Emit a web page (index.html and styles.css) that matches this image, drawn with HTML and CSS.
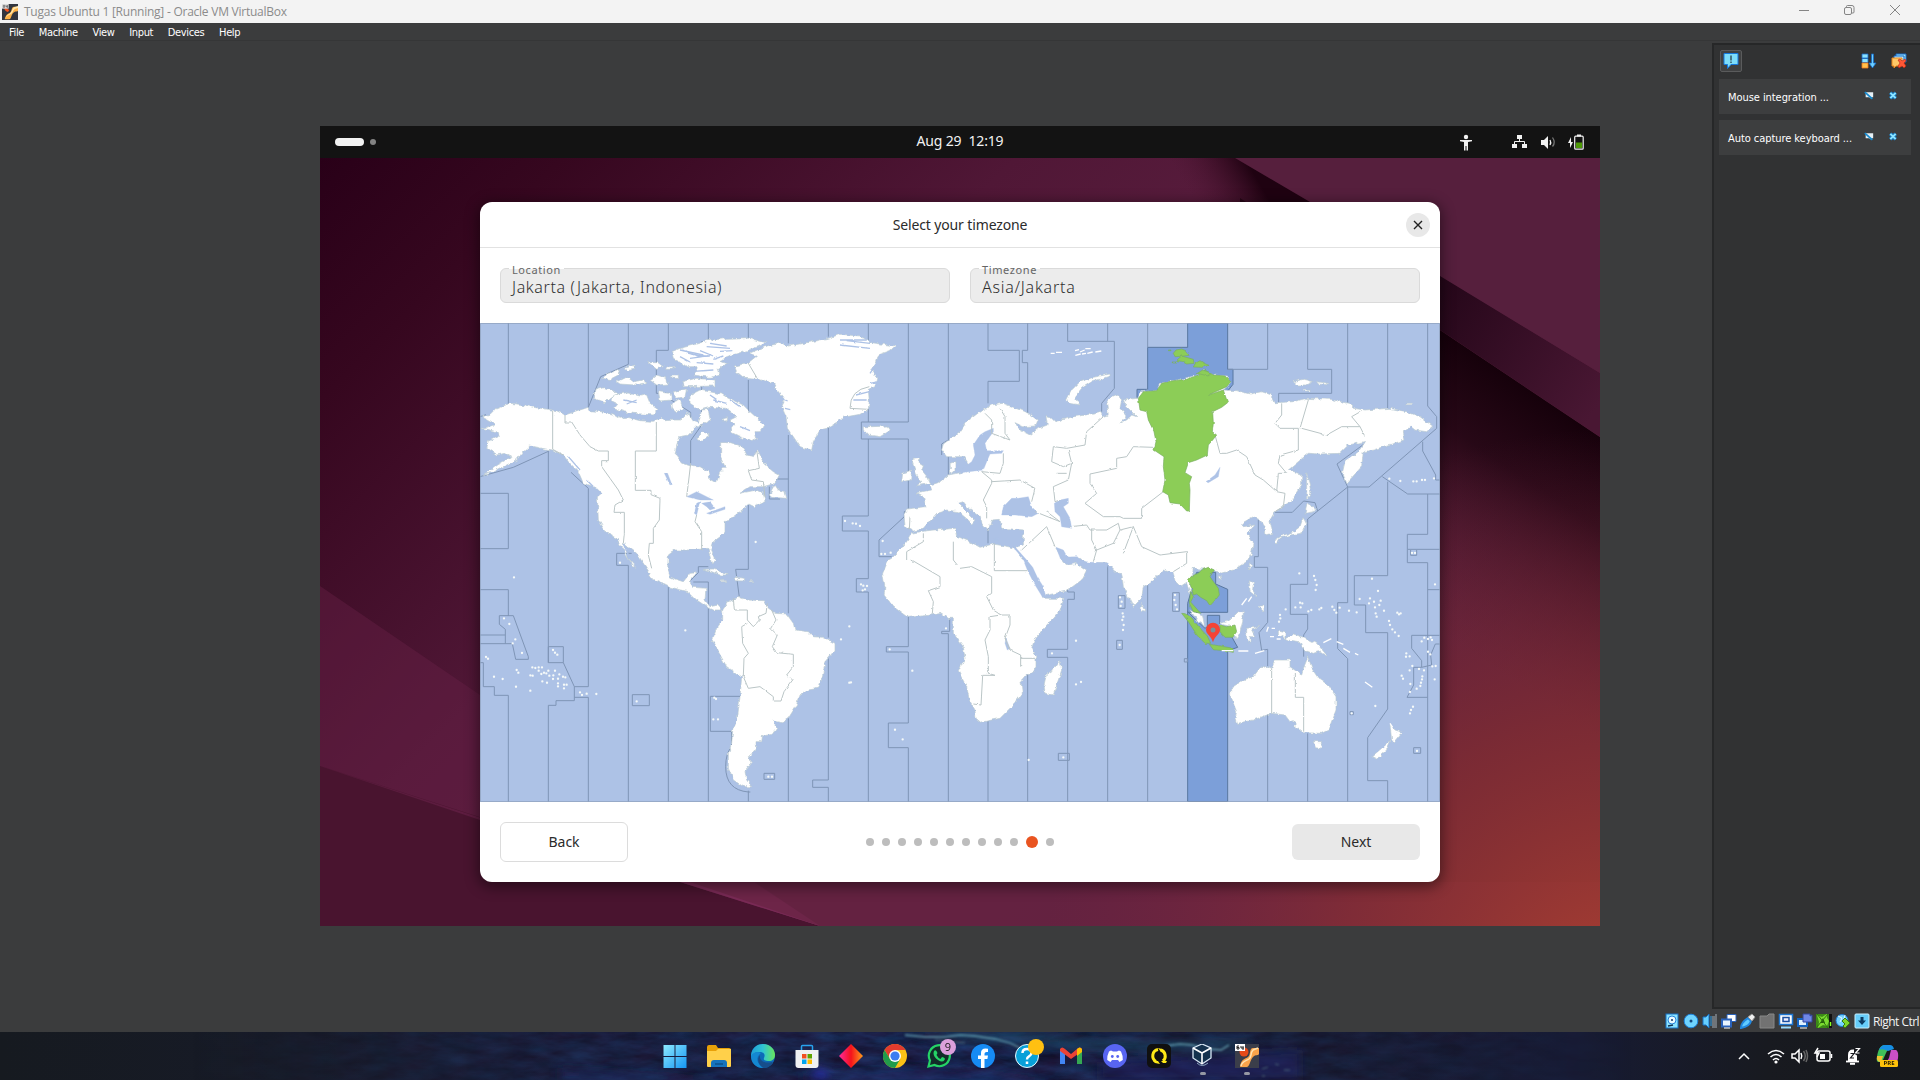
FILE: index.html
```html
<!DOCTYPE html>
<html lang="en">
<head>
<meta charset="utf-8">
<title>Tugas Ubuntu 1 [Running] - Oracle VM VirtualBox</title>
<link rel="stylesheet" href="styles.css">
</head>
<body>
<header class="titlebar">
  <svg class="app-icon" viewBox="0 0 24 24"><rect width="24" height="24" fill="#33363f"/><path d="M3 5c4 0 5 3 8 4l-2 3c-3 0-6-3-6-7z" fill="#f4511e"/><path d="M24 4h-6c-4 0-3 7-6 9s-6 2-8 10h7c3-1 3-7 6-10s6-1 7-3z" fill="#ffb347"/><path d="M24 3l-6 2c-3 3-3 6-5 8s-6 3-8 8c4-6 9-4 11-9s4-5 8-6z" fill="#ffe9b0"/><rect width="10" height="7" fill="#ddd"/><path d="M2 2h2v3H2zm4 0v2h2V2v4" stroke="#555" fill="none"/></svg>
  <span class="title">Tugas Ubuntu 1 [Running] - Oracle VM VirtualBox</span>
  <svg class="window-controls" viewBox="0 0 104 12"><g fill="none" stroke="#858585"><path d="M0 6.500h10"/><rect x="45.500" y="3.500" width="7" height="7" rx="1.500"/><path d="M47.500 3V2.500a1 1 0 0 1 1-1h4.500a2 2 0 0 1 2 2V8a1 1 0 0 1-1 1H53"/><path d="M91 1l10 10M101 1L91 11"/></g></svg>
</header>
<nav class="menubar"><span class="m-file">File</span><span class="m-machine">Machine</span><span class="m-view">View</span><span class="m-input">Input</span><span class="m-devices">Devices</span><span class="m-help">Help</span></nav>

<main class="workspace">
  <section class="guest">
    <div class="topbar">
      <div class="workspaces"><i class="pill"></i><i class="dot"></i></div>
      <div class="clock">Aug 29&nbsp; 12:19</div>
      <svg class="sysicons" viewBox="0 0 130 20" fill="#f2f2f2"><circle cx="11" cy="5" r="2.200"/><path d="M5 8h12v1.300l-4 .8V18.500h-1.500V14h-1v4.500H9v-8.400l-4-.8z"/><path d="M62 3h5v4h-5zM57 12h5v4h-5zM67 12h5v4h-5z"/><path d="M64.500 7v3M59.500 12v-2.500h10V12" fill="none" stroke="#f2f2f2"/><path d="M86 8h3l4-4v13l-4-4h-3z"/><path d="M95 8q1.500 2.500 0 5" fill="none" stroke="#f2f2f2" stroke-width="1.300"/><path d="M97.500 5.500q3.500 5 0 9" fill="none" stroke="#777" stroke-width="1.300"/><path d="M116 5l-3 6h2v5l3-6h-2z"/><rect x="119.700" y="4.200" width="8.500" height="13" rx="1" fill="none" stroke="#f2f2f2" stroke-width="1.200"/><path d="M122 2.500h4v2h-4z"/><path d="M121 10.500h6v5.500h-6z" fill="#4e9a06"/></svg>
    </div>
    <div class="desktop">
      <svg class="wallpaper" viewBox="0 0 1280 768" preserveAspectRatio="none">
        <defs>
          <linearGradient id="wp" x1="0" y1="0" x2="1" y2=".6"><stop offset="0" stop-color="#290018"/><stop offset=".14" stop-color="#36071f"/><stop offset=".4" stop-color="#501736"/><stop offset=".65" stop-color="#5c1f40"/><stop offset="1" stop-color="#5a1f38"/></linearGradient>
          <radialGradient id="glow" gradientUnits="userSpaceOnUse" cx="1300" cy="850" r="580"><stop offset="0" stop-color="#ad4130"/><stop offset=".5" stop-color="#903232" stop-opacity=".6"/><stop offset="1" stop-color="#762743" stop-opacity="0"/></radialGradient>
          <linearGradient id="facet" x1="0" y1="0" x2="1" y2=".7"><stop offset="0" stop-color="#5a1a3c"/><stop offset="1" stop-color="#712551"/></linearGradient>
          <linearGradient id="shadefold" gradientUnits="userSpaceOnUse" x1="1200" y1="226" x2="1060" y2="435"><stop offset="0" stop-color="#16010b"/><stop offset=".3" stop-color="#1e0410" stop-opacity=".85"/><stop offset="1" stop-color="#4b1627" stop-opacity="0"/></linearGradient>
          <linearGradient id="band" gradientUnits="userSpaceOnUse" x1="960" y1="30" x2="1280" y2="245"><stop offset="0" stop-color="#1f0211"/><stop offset=".5" stop-color="#26071a"/><stop offset="1" stop-color="#491733"/></linearGradient>
          <linearGradient id="topfade" gradientUnits="userSpaceOnUse" x1="925" y1="0" x2="868" y2="33"><stop offset="0" stop-color="#1f0211"/><stop offset="1" stop-color="#4c1531" stop-opacity="0"/></linearGradient>
        </defs>
        <rect width="1280" height="768" fill="url(#wp)"/>
        <path d="M0 428L160 537L430 768H0z" fill="#6a2148" opacity=".42"/>
        <path d="M0 608L500 768H0z" fill="#49142f"/>
        <path d="M0 608L160 662L160 537L250 600L500 768L360 724z" fill="url(#facet)" opacity=".75"/>
        <path d="M360 724L435 725L500 768z" fill="#792a55"/>
        <path d="M370 724H1280V768H500z" fill="#682343" opacity=".7"/>
        <path d="M920 40L1120 172L1280 279V768H920z" fill="url(#shadefold)"/>
        <rect width="1280" height="768" fill="url(#glow)"/>
        <path d="M840 0H930L1000 44H840z" fill="url(#topfade)"/>
        <path d="M1000 44L1280 215V279L1120 172L940 50z" fill="url(#band)"/>
        <path d="M915 0H1280V215L1120 118L990 44z" fill="#561f3d"/>
      </svg>
      <div class="dialog">
        <div class="dialog-head"><span class="dialog-title">Select your timezone</span><button class="close" aria-label="Close"><svg viewBox="0 0 24 24"><path d="M8 8l8 8M16 8l-8 8" stroke="#222" stroke-width="1.400"/></svg></button></div>
        <div class="fields">
          <div class="field"><label><span class="lb-location">Location</span></label><span class="value v-location">Jakarta (Jakarta, Indonesia)</span></div>
          <div class="field"><label><span class="lb-timezone">Timezone</span></label><span class="value v-timezone">Asia/Jakarta</span></div>
        </div>
        <svg class="map" viewBox="0 9 2880 1437" preserveAspectRatio="none">
          <defs>
            <filter id="coast" filterUnits="userSpaceOnUse" x="-20" y="-10" width="2920" height="1480" color-interpolation-filters="sRGB"><feTurbulence type="fractalNoise" baseFrequency=".06" numOctaves="3" seed="7" result="n"/><feDisplacementMap in="SourceGraphic" in2="n" scale="13" xChannelSelector="R" yChannelSelector="G"/></filter>
            <filter id="fine" filterUnits="userSpaceOnUse" x="-20" y="-10" width="2920" height="1480" color-interpolation-filters="sRGB"><feTurbulence type="fractalNoise" baseFrequency=".06" numOctaves="2" seed="7" result="n"/><feDisplacementMap in="SourceGraphic" in2="n" scale="7" xChannelSelector="R" yChannelSelector="G"/></filter>
          </defs>
          <rect y="9" width="2880" height="1437" fill="#adc2e6"/>
          <g fill="#7c9fd9" stroke="#59779f" stroke-width="3">
            <path d="M2123 9H2243V148H2259V193L2230 230L1990 260L1971 235V208H2003V82H2123z"/>
            <path d="M2207 757V792L2243 808V877H2123V850L2150 757z"/>
            <path d="M2123 875L2175 925L2182 920V886H2219V915L2255 950L2273 982L2243 992V1445H2123z"/>
          </g>
          <g class="zones">
            <path d="M85 9V252M0 520H85V686H0M0 809H85V888M205 9V268M205 393V1028M0 290L18 284M0 470L100 442L205 394M445 9V133L362 170L325 262V9M273 457L325 505V1100H283L250 1028V980H205V1028H250M283 1100V1142H228V1156H205V1445M283 1132H325V1445"/>
            <path d="M58 887H100L145 1010V1018H107L97 971H0M58 887V913L76 928V971M0 945H76M0 1028H10V1100H43V1126H85V1445M455 700H410V736H445V1445M457 1124H508V1157H457zM565 9V91H529V220H565V235L632 277V306H529M685 9V65H665V315L632 362V430M805 9V60M805 180V298M805 555V748H767L778 832M565 800V1445M640 786H685V1445M628 785L655 758V740H685M782 1129H691V1234H755V1280Q737 1300 737 1340Q737 1410 805 1416H811M805 1412V1445"/>
            <path d="M925 9V70M925 345V880M885 477H925M868 500V537H900M925 1195V1445M1045 9V50M1045 320V953M1045 1015V1380H998V1402H1045V1445M1165 9V60M1165 265V306M1285 9V306H1144V357H1285V567L1273 575V590L1197 660V710H1235M1165 357V588H1087V633H1165V776H1129V816H1165V1445M1285 890V980H1219V996H1285V1209H1225V1283H1285V1445M1405 9V360L1385 372V405M1405 385V465M1409 890V934H1385V941H1405V1445M852 1360H884V1378H852z"/>
          </g>
          <g class="zones" transform="translate(1440 0)">
            <path d="M84 9V91H178V184H84V250M203 9V91H187V128H203V280M323 9V64H463V205L425 250V275M443 9V64M563 9V82M803 148H923V9M1043 9V148H1115V220H956V250M1163 9V250M1283 9V265M1403 9V258L1430 290V325L1227 501H1163L1131 432L1215 370M84 605V670M203 530V590M1163 501L1043 597V793H991V883H1043V927L1031 945V1010M1073 573L1065 548L1031 543L997 577H945M895 600V710H883V742H923V907L897 938L905 991L923 988V1038M1163 501V848H1133V986L1163 1016V1445M1283 485V767H1183V855H1217V938H1283V1167L1223 1253V1382H1283V1445M1267 470L1343 522H1440M1388 365V393L1427 465V480H1440M1403 522V643H1342V688H1440M1352 690V706H1370V690M1342 688V728H1403V1445M1403 809H1440M1440 946H1355V985L1385 1022V1042H1361V1095L1341 1132H1403M1440 972H1426L1412 1005L1415 1035L1385 1042"/>
            <path d="M84 1200V1445M203 1060V1445M323 790V816H343V838H323V988H262V1012H323V1445M443 730V1445M563 790V1445M923 1170V1445M1043 1240V1445M475 827H495V865H475zM638 818H658V874H638zM470 961H487V988H470zM295 1300H328V1321H295zM1361 1283H1382V1300H1361zM1170 1175H1180V1184H1170zM673 1016H682V1026H673z"/>
          </g>
          <g class="land" filter="url(#coast)">
            <path d="M8 290L30 283L45 268L60 262L90 250L130 254L160 262L205 268L230 272L255 285L300 270L325 262L330 272L365 275L400 282L420 295L440 292L480 302L520 304L545 292L555 302L585 300L600 300L620 280L632 285L640 305L655 310L665 270L685 268L690 300L670 315L650 318L625 345L598 350L590 375L585 405L605 430L640 440L660 440L685 455L690 478L710 490L718 460L735 440L722 410L722 368L752 368L790 380L800 405L820 410L830 390L850 430L880 455L898 465L885 490L850 500L810 500L780 520L830 510L850 518L855 545L820 560L805 553L780 575L760 590L735 605L735 640L700 665L692 690L704 720L695 732L683 685L640 690L585 690L565 705L563 745L570 770L585 777L610 785L630 760L650 758L628 785L640 802L678 805L675 840L690 860L715 855L728 870L700 870L680 860L650 840L625 815L565 800L505 770L510 760L470 700L430 670L445 715L470 742L460 740L435 700L410 655L380 640L355 600L352 530L365 520L345 500L310 490L295 455L265 425L250 405L215 390L185 385L150 378L130 395L110 420L80 435L40 455L10 467L60 430L95 410L75 400L50 405L20 385L25 365L55 350L50 335L5 325L45 315L35 305z"/>
            <path d="M345 210L370 203L400 212L415 222L390 235L375 248L340 235zM400 225L440 218L480 228L500 225L510 250L535 270L520 285L460 280L430 275L400 262L410 250L390 240zM365 175L385 160L418 150L415 165L390 178zM410 185L440 170L460 185L490 180L500 188L470 195L420 192zM430 145L465 135L465 148L440 152zM503 125L530 125L550 140L530 148zM510 180L530 165L560 175L565 192L530 195zM575 95L600 85L640 75L680 62L740 55L800 53L858 68L835 80L800 92L740 110L720 125L745 130L715 145L720 165L690 172L640 165L655 140L620 140L600 125L580 115zM605 185L650 175L705 180L705 198L610 200zM580 215L620 207L615 230L590 235zM535 215L570 220L575 240L540 243zM575 250L600 240L612 265L590 275L578 265zM560 140l22 0l-5 8l-20 0zM575 165l20 0l0 10l-18 0z"/>
            <path d="M630 225L660 210L725 222L745 235L790 255L810 275L835 298L855 315L840 335L825 335L830 355L815 365L780 350L750 335L765 315L750 300L770 290L735 265L690 262L660 270L630 250zM650 355L670 335L688 345L665 362zM730 293L742 290L742 302L730 303zM868 525L885 495L895 510L915 515L920 535L875 532z"/>
            <path d="M763 138L805 128L830 108L808 100L855 80L905 68L925 78L980 68L1045 55L1080 43L1140 48L1175 68L1247 78L1230 92L1195 105L1188 130L1175 150L1190 175L1185 200L1165 208L1168 245L1165 268L1140 283L1090 292L1070 310L1045 325L1020 330L1000 365L995 390L960 380L940 350L922 325L918 290L905 260L915 240L895 215L880 190L835 175L790 172L770 155z"/>
            <path d="M1150 320L1175 320L1225 318L1233 330L1200 350L1165 345L1150 330zM1300 415L1320 412L1315 425L1330 435L1325 450L1345 475L1352 490L1310 497L1325 485L1310 465L1298 430zM1268 460L1295 450L1292 480L1265 485zM1410 430L1425 425L1425 455L1412 460z"/>
            <path d="M670 748L700 747L745 765L720 765L690 753zM765 772L793 775L793 783L765 782zM722 782h14v3h-14zM808 782h12v3h-12z"/>
            <path d="M728 870L745 845L775 832L800 840L850 842L860 860L885 880L920 882L940 910L945 930L985 935L1000 950L1030 952L1065 970L1065 990L1035 1025L1028 1065L1015 1105L985 1110L955 1130L950 1155L925 1195L905 1208L878 1203L890 1225L880 1240L848 1245L845 1265L825 1265L828 1290L805 1310L818 1325L795 1355L800 1380L815 1400L790 1400L760 1380L745 1345L745 1300L755 1270L758 1230L772 1200L780 1130L785 1070L740 1040L715 995L697 960L710 925L728 900z"/>
            <path d="M1295 640L1340 632L1425 625L1430 650L1470 665L1500 682L1540 672L1595 682L1610 690L1640 725L1655 765L1690 835L1752 835L1740 870L1705 910L1665 955L1655 985L1668 1015L1668 1045L1640 1065L1623 1085L1627 1120L1605 1150L1560 1195L1502 1207L1488 1195L1485 1170L1468 1140L1460 1100L1435 1055L1455 1015L1450 980L1420 940L1420 895L1405 895L1385 880L1355 885L1283 892L1240 860L1212 825L1215 800L1208 760L1225 720L1235 715L1260 690L1280 665z"/>
            <path d="M1385 390L1390 372L1440 335L1460 305L1500 275L1535 255L1570 250L1600 262L1645 280L1672 300L1665 318L1630 320L1605 308L1620 330L1650 345L1675 325L1702 315L1698 290L1715 295L1725 305L1780 290L1820 285L1835 280L1860 275L1870 290L1885 285L1880 250L1895 230L1915 222L1925 240L1920 265L1940 290L1920 310L1940 300L1955 285L1970 290L1940 260L1930 240L1970 235L1980 215L2030 212L2040 190L2100 178L2155 165L2170 152L2200 165L2240 168L2252 190L2230 210L2270 212L2310 222L2345 215L2375 225L2385 248L2440 245L2480 235L2550 238L2605 250L2620 265L2655 270L2730 265L2780 275L2820 290L2858 318L2840 335L2805 330L2790 318L2770 335L2775 360L2725 375L2680 390L2650 395L2645 440L2600 490L2588 455L2595 425L2635 395L2655 365L2605 375L2580 400L2520 402L2485 400L2455 425L2425 450L2465 462L2465 495L2430 545L2385 575L2370 600L2378 640L2358 645L2355 620L2340 600L2320 590L2285 610L2290 620L2325 615L2302 640L2320 665L2315 700L2300 725L2260 750L2225 760L2200 750L2140 745L2130 820L2120 790L2105 800L2085 780L2080 760L2050 750L2020 780L1990 800L1985 835L1960 860L1930 800L1925 760L1910 760L1880 728L1820 728L1800 715L1770 722L1740 700L1728 683L1750 725L1765 735L1790 730L1820 750L1805 780L1760 813L1693 827L1680 790L1650 750L1605 682L1630 675L1630 630L1565 625L1560 598L1535 600L1525 635L1510 620L1500 590L1470 570L1450 545L1435 550L1455 570L1485 600L1475 612L1465 600L1435 575L1400 570L1370 580L1345 610L1330 628L1300 633L1275 620L1272 580L1280 567L1338 560L1330 530L1308 518L1355 510L1350 495L1380 485L1405 465L1440 458L1475 450L1450 410L1400 410z"/>
            <path d="M1760 240L1775 210L1800 185L1840 172L1890 162L1890 170L1840 182L1805 205L1785 230L1800 255L1770 250zM2480 458L2488 490L2493 520L2480 538zM2482 548L2508 565L2500 575L2475 580zM2470 590L2480 610L2465 640L2430 645L2400 655L2390 672L2385 660L2405 648L2440 635L2460 620zM2440 185L2470 178L2500 185L2480 195L2450 195zM2510 185L2545 190L2545 194L2515 192zM2775 250h22v4h-22zM2470 208h20v5h-14z"/>
            <path d="M1740 1023L1745 1050L1720 1125L1695 1120L1692 1095L1700 1060L1725 1045zM1983 850L1997 870L1987 878L1980 865zM2308 725L2315 735L2308 750zM2215 768L2228 770L2220 782zM2130 870L2168 885L2173 915L2155 905zM2220 912L2250 900L2275 875L2290 875L2288 905L2280 935L2268 955L2255 920zM2308 782L2320 790L2318 810L2330 830L2310 815zM2335 860L2352 855L2352 875zM2300 925L2340 920L2315 930L2325 950L2310 950L2310 970L2300 955zM2395 930L2415 935L2415 955L2440 942L2480 955L2510 970L2540 1005L2515 995L2500 1000L2470 990L2460 965L2425 960L2395 945z"/>
            <path d="M2252 1105L2290 1080L2320 1070L2335 1050L2360 1038L2375 1045L2385 1020L2430 1020L2430 1040L2465 1065L2475 1030L2483 1010L2495 1045L2515 1075L2545 1095L2568 1130L2568 1170L2545 1230L2525 1240L2470 1238L2445 1220L2445 1200L2430 1205L2415 1185L2375 1180L2320 1200L2270 1210L2265 1195L2270 1175L2252 1130zM2500 1265h28l-8 22h-12zM2730 1212L2745 1230L2768 1237L2745 1265L2735 1262zM2732 1262L2720 1290L2690 1317L2675 1310L2705 1285z"/>
          </g>
          <g class="sea" filter="url(#fine)">
            <path d="M620 530L650 515L680 530L700 540L660 540zM650 550L660 545L650 585L643 580zM665 550L690 545L705 565L690 570L680 560zM680 580L735 560L735 568L690 583zM553 460L562 458L575 492L570 495zM1515 335L1540 325L1540 335L1515 370L1520 392L1570 392L1565 400L1530 402L1520 425L1510 450L1440 458L1455 440L1475 425L1485 405L1480 375L1500 345zM1570 560L1595 535L1615 535L1645 530L1655 560L1675 580L1655 590L1605 585L1565 585zM1723 550L1740 540L1765 535L1765 550L1750 560L1770 595L1775 625L1745 620L1740 590L1725 575zM2178 485L2205 465L2220 442L2215 470L2185 488zM1578 955L1590 985L1582 990L1575 970zM1545 655h10v5h-10z"/>
            <path d="M1600 682L1608 684L1640 720L1658 742L1672 772L1690 800L1697 828L1688 832L1662 790L1642 750L1628 715zM1728 682L1750 690L1762 711L1792 710L1804 724L1835 727L1885 729L1880 745L1822 745L1800 735L1788 727L1765 733L1742 718z"/>
            <path d="M600 90l70 15M630 115l60-8M680 80l70 5M700 150l-70 5M620 98l40 12l30-2M650 128l50 4M660 92l40 16M700 118l30-10M740 78l-50-8M760 92l-40 2M600 110l30 16M1080 75l90 10M1100 62l70 8M1080 60l80 0M1190 130l-20 30M1195 185l-25 5M1168 215l-40 10M1160 240l-40 0M905 235l18 8M915 265l16 4M265 410l35 40M320 480l40 40M750 240l30 20M700 240l40 10M690 225l20 14M780 320l30 12M430 240l40 8M470 240l-30 12M430 672l20 42" stroke-width="4"/>
          </g>
          <g class="borders" filter="url(#fine)">
            <path d="M218 272V388L250 405M255 285V306H275L300 345L330 380L355 393H385V422H365V440L390 475L415 510L430 540L405 555L402 577H433V640L430 670M529 306V393H466V511H513V524L540 535L538 600L520 625V670H508L505 705L515 745M632 430L625 490L620 530M650 585L645 605L665 635V690M830 390L838 445L805 452L815 480L850 485L855 530M805 130L830 172M1168 200Q1110 210 1110 265L1165 268"/>
            <path d="M760 835L763 870H802V900L820 920L838 900L835 890L858 880L862 850M802 910L785 920L788 970L805 1000L792 1015L790 1070L805 1105L840 1100L880 1130V1143H903L912 1115L938 1080L920 1065L940 1040V1003L890 998L877 980L892 945L872 925L888 900L875 870M1290 590L1288 630M1330 640V665L1280 695V720M1295 720L1380 770V800L1345 812L1360 845L1357 880M1420 665V720L1432 735M1440 745L1475 740L1535 770V820L1520 830L1540 870L1563 885H1590V915L1575 955L1590 990L1622 1005V1040M1622 1015H1665M1563 885L1530 890V930L1515 960L1525 1010V1060L1545 1066H1508L1503 1155L1480 1152M1543 670V752H1640"/>
            <path d="M1515 280L1535 300V340L1590 360L1575 340V290L1560 265M1570 400V430L1560 460L1505 455L1535 480V490L1510 540L1520 560V595M1535 485L1620 480L1665 505L1655 545M1870 290L1820 335L1815 375L1760 385L1720 380L1715 425L1750 440L1775 430L1765 390M1775 430L1765 480L1720 500L1725 545L1740 540M1730 460H1760M2020 382L1960 380L1940 410L1910 415V445L1830 462V490L1850 520L1815 550L1870 590H1920L1930 595L1985 595V565L2050 515M1665 575L1740 605L1700 575M1700 620L1625 690M1700 620L1725 680M1770 620L1820 615L1830 630L1880 630L1915 610L1920 630L1900 670L1850 690L1835 660V630M1850 690L1840 725M1920 630L1960 620L1985 680L2040 705L2120 695V730L2080 755M1960 620L1930 700M2205 345L2220 400H2240L2270 390L2300 410L2325 465L2350 480L2390 515L2395 460L2420 460L2395 430L2400 405L2455 390V325L2400 325L2385 310L2405 285V250M2465 325L2540 345L2585 320H2640L2655 350M2640 320L2615 290L2650 270M2485 240L2460 325M2390 515L2415 520L2410 560L2385 575M2375 1045V1180M2446 1060V1132H2471V1235"/>
          </g>
          <g class="green" filter="url(#fine)">
            <path d="M1980 270L1975 235L1990 215L2030 212L2045 190L2080 182L2120 178L2155 165L2175 150L2200 165L2235 168L2252 185L2240 200L2185 225L2230 210L2243 248L2225 262L2198 275L2200 310L2197 335L2210 345L2198 360L2185 375L2182 405L2150 420L2125 428L2115 458L2135 470L2128 490L2130 510L2128 573L2120 573L2100 552L2070 548L2065 525L2048 515L2055 480L2050 440L2052 410L2022 390L2028 365L2022 335L2005 300L2000 275z"/>
            <path d="M2080 100L2088 90L2105 87L2117 92L2127 106L2105 109L2085 110zM2090 122L2095 116L2105 108L2140 118L2142 130L2120 132L2105 124zM2140 141L2146 130L2160 122L2172 130L2187 136L2165 142zM2152 160L2168 150L2190 158L2185 168zM2065 90h8v2h-8zM2076 126h12v3h-10z"/>
            <path d="M2125 780L2135 768L2155 760L2165 750L2185 742L2203 750L2190 770L2198 782L2215 805L2218 825L2208 838L2190 857L2180 842L2162 832L2150 822L2140 825L2135 805zM2132 815L2140 830L2132 846L2155 872L2162 880L2140 875L2128 850zM2105 880L2115 881L2135 893L2160 925L2182 948L2192 970L2175 970L2152 947L2127 908zM2188 973L2215 977L2260 985L2260 997L2235 992L2200 989zM2220 915L2240 920L2265 915L2270 935L2258 952L2235 952L2220 935z"/>
          </g>
          <path class="islets" d="M102 772h0M72 895h0M88 912h0M106 958h0M98 970h0M126 999h0M18 1011h0M24 1016h0M219 990h0M225 998h0M232 1004h0M42 1070h0M68 1077h0M110 1050h0M115 1058h0M108 1100h0M151 1112h0M157 1042h0M166 1044h0M176 1042h0M186 1042h0M176 1052h0M184 1062h0M192 1058h0M205 1052h0M199 1060h0M208 1067h0M151 1066h0M158 1067h0M225 1052h0M220 1066h0M238 1063h0M249 1070h0M256 1072h0M187 1084h0M201 1088h0M219 1077h0M234 1076h0M234 1090h0M234 1099h0M252 1094h0M260 1094h0M252 1105h0M300 1117h0M306 1125h0M320 1121h0M349 1122h0M470 1144h0M703 1133h0M708 1137h0M700 1198h0M714 1198h0M1095 603h0M1118 610h0M1128 611h0M1140 618h0M827 666h0M1208 663h0M1204 702h0M1215 702h0M1232 698h0M1143 793h0M1150 797h0M1161 798h0M1155 808h0M1148 811h0M1108 919h0M1083 958h0M1229 988h0M1297 1052h0M1108 1088h0M1113 1087h0M1245 1229h0M1268 1258h0M1398 925h0M616 931h0M420 728h0M865 1370h0M876 1370h0"/>
          <path class="islets" transform="translate(1440 720)" d="M348 242h0M348 373h0M363 366h0M276 280h0M310 592h0M206 600h0M479 255h0M488 160h0M490 170h0M487 180h0M491 195h0M489 210h0M480 112h0M485 125h0M482 138h0M645 105h0M643 120h0M647 135h0M651 148h0M1018 40h0M1062 48h0M1066 60h0M1070 75h0M1067 90h0M1236 56h0M1425 73h0M1254 93h0M1230 115h0M1242 125h0M1227 130h0M1245 142h0M1262 122h0M1258 135h0M1247 160h0M1250 170h0M1272 152h0M1312 158h0M1322 160h0M1317 163h0M1199 117h0M1117 140h0M1123 150h0M1129 158h0M1139 143h0M1167 152h0M1190 157h0M1078 148h0M1084 144h0M1054 150h0M1045 154h0M1027 130h0M1020 128h0M1022 142h0M1006 142h0M977 148h0M960 165h0M961 175h0M957 185h0M1287 183h0M1290 195h0M1297 208h0M1305 217h0M1316 228h0M1393 233h0M1404 237h0M1412 232h0M1416 240h0M1385 244h0M1339 280h0M1338 290h0M1349 289h0M1404 275h0M1411 283h0M1357 318h0M1377 327h0M1392 331h0M1349 331h0M1325 347h0M1329 356h0M1387 349h0M1386 358h0M1383 368h0M1381 378h0M1370 386h0M1351 372h0M1350 396h0M1417 319h0M1427 318h0M1424 358h0M1246 438h0M1359 440h0M1353 450h0M1350 460h0M1371 573h0M1175 460h0M1288-244h0M1321-237h0M1360-236h0M1370-236h0M1386-240h0M1395-240h0M1422-245h0M1356-21h0M1365-21h0"/>
          <path d="M1712 100h12M1728 97h18M1785 92l12-3M1800 96l14-6M1816 86h16M1786 106l16-4M1806 102l12-2M1822 100l16-4M1846 96l18-3M2225 992h35M2275 993h30M2325 1000l28-8M2530 968l24-12M2570 965l20 8M2590 985l20 12M2625 1000l10 5M2655 1086l22 16M2285 855l15-20M2305 845l10-15M2360 935l5-15M2375 925h10M2370 950h12M2390 957h12M2730 1210l8 12" stroke="#fff" stroke-width="4" fill="none"/>
          <path d="M2199 967C2194 947 2178 943 2178 929A21 21 0 0 1 2220 929C2220 943 2204 947 2199 967z" fill="#f44336"/><circle cx="2199" cy="930" r="7.500" fill="#78909c"/>
          <rect x="1.500" y="10.500" width="2877" height="1434" fill="none" stroke="#8d9fbb" stroke-width="3" opacity=".7"/>
        </svg>
        <div class="dialog-foot">
          <button class="btn back"><span>Back</span></button>
          <div class="pager"><i></i><i></i><i></i><i></i><i></i><i></i><i></i><i></i><i></i><i></i><i class="active"></i><i></i></div>
          <button class="btn next"><span>Next</span></button>
        </div>
      </div>
    </div>
  </section>
  <aside class="notifications">
    <div class="tools">
      <span class="tool-active"><svg viewBox="0 0 16 16"><path d="M1 .5h14v11H8l-3.500 4v-4H1z" fill="#7dddfa" stroke="#1478dd"/><path d="M8 2.500v5M8 8.500v1.500" stroke="#111"/></svg></span>
      <svg class="tool-sort" viewBox="0 0 16 16"><g stroke="#1769c8" stroke-width=".8"><path d="M1 1h6v4H1zM1 5.500h6v4H1z" fill="#8ae2ff"/><path d="M10.500 1h2v9H15l-3.500 5L8 10h2.500z" fill="#6ccfff"/></g><path d="M1 10h6v5H1z" fill="#ffc14e" stroke="#f07a1b" stroke-width=".8"/></svg>
      <svg viewBox="0 0 16 16"><path d="M5 1h10v8H5z" fill="#97e3fb" stroke="#1769c8"/><path d="M3 3h10v7H3z" fill="#bcecff" stroke="#1769c8"/><path d="M1 5h10v8H5l-2 2v-2H1z" fill="#ffc867" stroke="#e8851b"/><path d="M7 7l2-1 2 2 3-2 1 2-2 2 2 3-2 2-2-2-3 2-1-2 2-3z" fill="#ff5836" stroke="#b9200e" stroke-width=".6"/></svg>
    </div>
    <div class="notice"><span class="n-mouse">Mouse integration ...</span><svg viewBox="0 0 12 10"><path d="M2 1h9v6H9v2L6 7H2z" fill="#e6f0f5"/><path d="M1 1l9 8" stroke="#1589ce" stroke-width="2"/></svg><svg viewBox="0 0 10 10"><path d="M2 2l6 6M8 2L2 8" stroke="#147ec9" stroke-width="4"/><path d="M2 2l6 6M8 2L2 8" stroke="#8de4ff" stroke-width="2"/></svg></div>
    <div class="notice"><span class="n-keyboard">Auto capture keyboard ...</span><svg viewBox="0 0 12 10"><path d="M2 1h9v6H9v2L6 7H2z" fill="#e6f0f5"/><path d="M1 1l9 8" stroke="#1589ce" stroke-width="2"/></svg><svg viewBox="0 0 10 10"><path d="M2 2l6 6M8 2L2 8" stroke="#147ec9" stroke-width="4"/><path d="M2 2l6 6M8 2L2 8" stroke="#8de4ff" stroke-width="2"/></svg></div>
  </aside>
</main>

<div class="statusbar">
  <svg viewBox="0 0 16 16"><rect x="2" y="1" width="12" height="14" fill="#8be3ff" stroke="#1672c8"/><circle cx="8" cy="7" r="4" fill="#eafaff" stroke="#2484dc"/><circle cx="8" cy="7" r="1" fill="#136"/><path d="M4 13l5-1" stroke="#135" stroke-width="1.500"/></svg>
  <svg viewBox="0 0 16 16"><circle cx="8" cy="8" r="6.800" fill="#6fd4ff" stroke="#1d86e0"/><circle cx="8" cy="8" r="1.500" fill="#134a80"/></svg>
  <svg viewBox="0 0 16 16"><path d="M1 4h3l3-3v14l-3-3H1z" fill="#66cfff" stroke="#1672c8"/><path d="M9 3v10" stroke="#2aa0f0"/><path d="M10 3h3v-2h2v14h-5z" fill="#70757a"/></svg>
  <svg viewBox="0 0 16 16"><g stroke="#2a62bb" fill="#fff"><path d="M6 1.500h9v7H6z"/><path d="M1 6.500h9v7H1z" fill="#e8f4ff" stroke-width="2"/></g><path d="M3 15h6" stroke="#fff"/></svg>
  <svg viewBox="0 0 16 16"><path d="M1 15c0-6 4-8 7-10l3 3c-1 4-5 6-10 7z" fill="#61cbff" stroke="#2188e0" stroke-width="2"/><path d="M8 4l4-3 3 3-3 4z" fill="#f0f0f0" stroke="#999"/></svg>
  <svg viewBox="0 0 16 16"><path d="M1 3h7l2-2h5v14H1z" fill="#727272" stroke="#888"/></svg>
  <svg viewBox="0 0 16 16"><path d="M1.500 1.500h13v10h-13z" fill="#fff" stroke="#1c76d2" stroke-width="1.500"/><path d="M5 4.500h6v4H5z" fill="#eef" stroke="#1a4fa0" stroke-width="1.500"/><path d="M3 14.500h10" stroke="#9bdcff" stroke-width="2"/></svg>
  <svg viewBox="0 0 16 16"><path d="M1 6h9v7H1z" fill="#dff1ff" stroke="#1464c2" stroke-width="2"/><path d="M6 1h7v2l2-1v7H6z" fill="#6f87e6" stroke="#3446a0"/><path d="M3 15h7" stroke="#fff"/></svg>
  <svg viewBox="0 0 16 16"><path d="M0 1h13v14H0z" fill="#3c8a17"/><path d="M1 2l5 2 5-3v4l2 3-2 5-4-1-5 3 1-6z" fill="#7bdc31"/><path d="M4 10l3-5 2 5z" fill="#245d0a"/><path d="M0 15L12 1M1 1l11 14" stroke="#2f7310"/><path d="M13 1h3v14h-3z" fill="#111"/><path d="M14.500 9v4" stroke="#8f2" stroke-width="1.500"/></svg>
  <svg viewBox="0 0 16 16"><circle cx="7" cy="7.500" r="6" fill="#75d3ff" stroke="#1d79cf"/><path d="M3 3l4 2-2 4M10 2l-1 4" stroke="#e9faff" fill="none"/><path d="M7 8l3-3 5 5-5 5-2-2 2-2z" fill="#7fd62e" stroke="#36790e"/></svg>
  <svg viewBox="0 0 16 16"><rect x="1" y="1" width="14" height="14" rx="1" fill="#66cdfa" stroke="#c7efff"/><path d="M6.500 4h3v3.500H12L8 12 4 7.500h2.500z" fill="#0c3c63"/></svg>
  <span class="hostkey">Right Ctrl</span>
</div>

<footer class="taskbar">
  <svg class="scene" viewBox="0 0 1920 48" preserveAspectRatio="none"><defs><linearGradient id="tb"><stop offset="0" stop-color="#161a20"/><stop offset=".16" stop-color="#171b28"/><stop offset=".3" stop-color="#1a1f3a"/><stop offset=".5" stop-color="#192146"/><stop offset=".68" stop-color="#181c31"/><stop offset=".82" stop-color="#171b34"/><stop offset=".92" stop-color="#181a20"/><stop offset="1" stop-color="#17191c"/></linearGradient><linearGradient id="fadeout"><stop offset=".1" stop-color="#000"/><stop offset=".3" stop-color="#777"/><stop offset=".5" stop-color="#ccc"/><stop offset=".7" stop-color="#555"/><stop offset=".85" stop-color="#000"/></linearGradient><mask id="mid"><rect width="1920" height="48" fill="url(#fadeout)"/></mask><filter id="soft"><feGaussianBlur stdDeviation="5"/></filter><filter id="soft2"><feGaussianBlur stdDeviation=".8"/></filter><filter id="reef" x="0" y="0" width="1" height="1" color-interpolation-filters="sRGB"><feTurbulence type="fractalNoise" baseFrequency=".03 .09" numOctaves="4" seed="12"/><feColorMatrix values="0 .25 0 0 -.03  0 .2 .4 0 -.17  0 .4 .6 0 -.2  0 0 0 0 .6"/></filter></defs><rect width="1920" height="48" fill="url(#tb)"/><g mask="url(#mid)"><rect width="1920" height="48" filter="url(#reef)"/></g><g filter="url(#soft)"><path d="M900 0h120l80 8 150 1v8l-160 0-120-8z" fill="#1e5a73" opacity=".5"/><path d="M560 36l180 12H560zM800 44l130-10 130 16H800z" fill="#273079" opacity=".45"/><path d="M1100 30l200-12v30h-200z" fill="#202068" opacity=".5"/><ellipse cx="820" cy="42" rx="8" ry="4" fill="#292bb0"/></g><g filter="url(#soft2)" fill="none" stroke="#7fc6d4" opacity=".6"><path d="M905 3l20 2 20 0 15-2 15 1 20 3 15 4 10 5M1165 14l15-2 12 1 14 4 15 1 8-5" stroke-width="1.800"/><path d="M935 8l30 3M1262 37l6-2M1275 32l4 1M1284 38l6 0M1262 44l3 0" stroke="#6f9c97"/></g></svg>
  <div class="apps">
    <svg viewBox="0 0 24 24"><defs><linearGradient id="w" x2="1" y2="1"><stop stop-color="#8deaff"/><stop offset="1" stop-color="#1596f4"/></linearGradient></defs><path d="M.5 1h11v11h-11zM12.500 1h11v11h-11zM.5 13h11v11h-11zM12.500 13h11v11h-11z" fill="url(#w)"/></svg>
    <svg viewBox="0 0 24 24"><path d="M0 3q0-2 2-2h7l2 3h11q2 0 2 2v5H0z" fill="#e8a008"/><path d="M0 7h9l2-2h13v17q0 1-1 1H1q-1 0-1-1z" fill="#ffd04a"/><path d="M4 23v-4q0-3 3-3h10q3 0 3 3v4z" fill="#1673bd"/><path d="M8 20h8" stroke="#0c518b" stroke-width="1.500"/></svg>
    <svg viewBox="0 0 24 24"><defs><linearGradient id="e" x2="1"><stop stop-color="#1f9fd8"/><stop offset=".5" stop-color="#30c4d3"/><stop offset="1" stop-color="#69e65b"/></linearGradient></defs><circle cx="12" cy="12" r="12" fill="#0d69b8"/><path d="M0 11C1 3 7 0 12 0c8 0 12 6 12 11 0 4-3 6-6 6-4 0-6-1-5-3 2-4-1-6-4-6-4 0-7 1-9 5z" fill="url(#e)"/><path d="M0 12c2-4 7-5 10-3-6 4-4 11 2 15C4 24 0 18 0 12z" fill="#1488d2"/><path d="M9 11c-1 6 5 9 12 7l1 1c-3 4-7 5-9 5-5-2-8-9-4-13z" fill="#174e8b"/></svg>
    <svg viewBox="0 0 24 24"><path d="M6.500 7V2.500q0-1 1-1h9q1 0 1 1V7" fill="none" stroke="#28a3ef" stroke-width="1.500"/><path d="M.5 6h23v15q0 3-3 3h-17q-3 0-3-3z" fill="#f0f1f2"/><path d="M7 10h4.500v4.500H7z" fill="#f25022"/><path d="M12.500 10H17v4.500h-4.500z" fill="#5fa400"/><path d="M7 15.500h4.500V20H7z" fill="#00a4ef"/><path d="M12.500 15.500H17V20h-4.500z" fill="#ffb900"/></svg>
    <svg viewBox="0 0 24 24"><defs><linearGradient id="d"><stop stop-color="#ff2a9c"/><stop offset=".5" stop-color="#f5121b"/><stop offset="1" stop-color="#ff9d1b"/></linearGradient></defs><path d="M12 0l12 12-12 12L0 12z" fill="url(#d)"/></svg>
    <svg viewBox="0 0 24 24"><circle cx="12" cy="12" r="12" fill="#fbc116"/><path d="M1.600 6A12 12 0 0 1 22.400 6H12L7 15z" fill="#e33b2e"/><path d="M1.600 6A12 12 0 0 0 12 24l5.200-9H7z" fill="#229b4b"/><circle cx="12" cy="12" r="6" fill="#fff"/><circle cx="12" cy="12" r="4.600" fill="#3c7df0"/></svg>
    <span class="with-badge"><svg viewBox="0 0 24 24"><path d="M1.500 22.500l1.500-6A10.500 10.500 0 1 1 7.500 21z" fill="#122c29" stroke="#25d366" stroke-width="2.200"/><path d="M7 7q2-2 3.500 2L9.500 11q1.500 3 4 4l1.500-2q4 1 2.500 3-2 3-6.500 0T6.500 9z" fill="#25d366"/></svg><b class="badge pink">9</b></span>
    <svg viewBox="0 0 24 24"><circle cx="12" cy="12" r="12" fill="#168bf4"/><path d="M10 24v-9H7v-3.500h3V9q0-4.500 4.500-4.500l2.500.3V8h-1.500q-2 0-2 1.800v1.700H17l-.6 3.500h-2.900v9z" fill="#fff"/></svg>
    <span class="with-badge"><svg viewBox="0 0 24 24"><circle cx="12" cy="12" r="11.500" fill="#08a0d8" stroke="#e9f9fe"/><path d="M7.500 9q0-4 4.500-4t4.500 4q0 2-2.500 3.300-2 1-2 3.200M12 17.500V20" stroke="#fff" stroke-width="2.500" fill="none"/></svg><b class="badge amber"></b></span>
    <svg viewBox="0 0 24 24"><path d="M1 20V5l5 4v11z" fill="#4285f4"/><path d="M18 20V9l5-4v15z" fill="#34a853"/><path d="M1 7V5q2-3 5 0l6 5 6-5q3-3 5 0v2l-11 8z" fill="#ea4335"/><path d="M18 5q3-3 5 0v3l-5 4z" fill="#fbbc04"/></svg>
    <svg viewBox="0 0 24 24"><circle cx="12" cy="12" r="12" fill="#5865f2"/><path d="M8 6.500l2 1h4l2-1 2 1q2 4 1.800 8.500L16.500 18l-1.500-2H9l-1.500 2-3.300-2Q4 11.500 6 7.500z" fill="#fff"/><circle cx="9.300" cy="12.500" r="1.400" fill="#5865f2"/><circle cx="14.700" cy="12.500" r="1.400" fill="#5865f2"/></svg>
    <svg viewBox="0 0 24 24"><rect width="24" height="24" rx="5" fill="#101010"/><path d="M9 17.500A6.500 6.500 0 0 1 11 5.500M14 6A6.500 6.500 0 0 1 16 17" fill="none" stroke="#ffe916" stroke-width="3"/><path d="M6 17h5l2 3-5-1zM14 17h6l-1 2h-3zM11 4l4 1-1 3z" fill="#ffe916"/></svg>
    <span class="running"><svg viewBox="0 0 24 24"><path d="M2 4l9-4 9 4v10l-9 6-9-6z" fill="#14324e" stroke="#d9e8f5" stroke-width="1.300"/><path d="M2 4l9 5 9-5M11 9v11" fill="none" stroke="#fff" stroke-width="1.600"/><path d="M6 19q5 5 11 0" fill="none" stroke="#8da9bf"/></svg></span>
    <span class="running"><svg viewBox="0 0 24 24"><rect width="24" height="24" fill="#3b3e4a"/><circle cx="9" cy="8" r="4.500" fill="#e64a19"/><path d="M24 4h-6c-4 0-2 7-5 9s-7 2-8 10h7c3-1 3-7 6-10s5-1 6-3z" fill="#f9a34a"/><path d="M23 4l-5 2c-3 3-1 7-4 9s-7 2-8 7" fill="none" stroke="#ffe2b0" stroke-width="1.500"/><rect width="10" height="7" fill="#fff"/><path d="M4 2H2v3h2V3.500H2M6 2v2h3M8 2v4" fill="none" stroke="#222"/></svg></span>
  </div>
  <svg class="tray" viewBox="0 0 170 28" fill="none" stroke="#fff" stroke-width="1.500"><path d="M10 17l5-5 5 5"/><g stroke-width="1.600"><path d="M39 12q8-7 16 0M41.500 15q5.500-5 11 0M44 18q3-3 6 0"/><circle cx="47" cy="20" r=".8" fill="#fff"/></g><path d="M63 12h3l4-4v12l-4-4h-3zM72 11q1.500 3 0 6"/><path d="M74.500 9q3.500 5 0 10M77 8q3 6 0 12" stroke="#666"/><rect x="88" y="9" width="13" height="10" rx="2"/><path d="M91 12h5v5h-5z" fill="#fff" stroke="none"/><path d="M102.500 12v4M89 6l-3 5h4l-2 4"/><path d="M117 19.500h13" stroke-width="1.800"/><path d="M119 19v-6q0-5.500 5-5.500h1v4l3 2v5.500z" fill="#fff" stroke="none"/><path d="M121 21.800h5" stroke-width="2"/><path d="M126.500 6.500h4l-4 4.500h4" stroke-width="1.200"/><path d="M121.500 11.500h3.500l-3.500 4.500h3.500" stroke="#1a1b20" stroke-width="1.200"/><g stroke="none"><path d="M148 15c1-7 3-12 8-12h5l-4 8-4 9h-4q-2-1-1-5z" fill="#3fc05a"/><path d="M150 8c1-3 3-5 6-5h5q3 0 4 4l-6 2q-6-3-9-1z" fill="#168fe4"/><path d="M169 11c1 7-2 13-7 13h-7l5-8 2-8h5q1 0 2 3z" fill="#c94fc6"/><path d="M148 14l6 0-2 6q-5 0-4-6z" fill="#edc433"/><rect x="151" y="18" width="18" height="7" rx="1.500" fill="#ffc20a"/></g></svg>
  <span class="pre">PRE</span>
</footer>
</body>
</html>
```
FILE: styles.css
```css
*{box-sizing:border-box}
body{margin:0;width:1920px;height:1080px;overflow:hidden;display:flex;flex-direction:column;background:#3b3c3d;font-family:"Open Sans","Noto Sans",sans-serif}
svg{display:block;flex:none}
button{font:inherit;border:0;padding:0}
.titlebar{height:23px;flex:none;background:#f3f3f3;display:flex;align-items:center;padding-left:2px;color:#8b8b8b;font-size:12px}
.app-icon{width:16px;height:16px;margin-right:6px}
.title{white-space:nowrap;letter-spacing:-.24px}
.window-controls{width:104px;height:12px;margin-left:auto;margin-right:17px;margin-bottom:3px}
.menubar{height:18px;flex:none;display:flex;align-items:center;padding:2px 0 0 9px;gap:14.7px;color:#fff;font:11px "DejaVu Sans Condensed","DejaVu Sans",sans-serif;letter-spacing:-.35px;border-bottom:1px solid #353637}
.menubar span{white-space:nowrap}
.workspace{height:968px;flex:none;display:grid;grid-template-columns:320px 1280px 320px;align-items:start}
.guest{grid-column:2;margin-top:85px;height:800px;display:flex;flex-direction:column}
.topbar{height:32px;flex:none;background:#131313;color:#f2f2f2;display:grid;grid-template-columns:1fr auto 1fr;align-items:center}
.workspaces{display:flex;align-items:center;gap:6px;padding-left:15px}
.pill{width:29px;height:8px;border-radius:4px;background:#f2f2f2}
.dot{width:6px;height:6px;border-radius:50%;background:#848484}
.clock{font:14px "Noto Sans",sans-serif;white-space:nowrap;text-align:center;letter-spacing:-.15px;margin-top:-4px}
.sysicons{width:130px;height:20px;justify-self:end;margin-right:15px}
.desktop{flex:1;display:grid;grid-template-columns:160px 960px 160px;grid-template-rows:44px 680px 44px}
.wallpaper{grid-area:1/1/4/4;width:1280px;height:768px}
.dialog{grid-area:2/2;background:#fff;border-radius:12px;box-shadow:0 3px 14px 2px rgba(0,0,0,.45);display:flex;flex-direction:column;overflow:hidden;color:#2b2b2b;font-family:"Noto Sans",sans-serif}
.dialog-head{height:46px;flex:none;border-bottom:1px solid #e2e2e2;display:grid;grid-template-columns:1fr auto 1fr;align-items:center}
.dialog-title{grid-column:2;font-size:14px;white-space:nowrap;letter-spacing:-.13px}
.close{width:24px;height:24px;border-radius:50%;background:#e8e8e8;justify-self:end;margin-right:10px}
.close svg{width:24px;height:24px}
.fields{height:75px;flex:none;padding:20px 20px 0;display:flex;gap:20px}
.field{width:450px;height:35px;background:#ececec;border:1px solid #dadada;border-radius:6px;padding-left:11px;display:flex;flex-direction:column}
.field label{font-size:11px;line-height:12px;height:9px;margin-top:-5px;color:#666;display:flex}
.field label span{background:linear-gradient(#fff 5px,#ececec 5px);padding:0 3px;margin-left:-3px;letter-spacing:.6px}
.value{font-size:16px;line-height:22px;white-space:nowrap;color:#303030;margin-top:3px;font-weight:300;letter-spacing:.62px}
.v-timezone{letter-spacing:.75px}
.map{width:960px;height:479px}
.zones{fill:none;stroke:#7f95b6;stroke-width:3}
.land{fill:#fff;stroke:#bccbd0;stroke-width:2}
.sea{fill:#adc2e6;stroke:#adc2e6;stroke-width:1}
.green{fill:#8ccd57;stroke:#78ad60;stroke-width:2}
.borders{fill:none;stroke:#bac5c6;stroke-width:3}
.islets{fill:none;stroke:#f6faf9;stroke-width:7;stroke-linecap:round}
.dialog-foot{flex:1;display:flex;align-items:center;justify-content:space-between;padding:0 20px 0}
.btn{width:128px;border-radius:6px;font-size:14px;color:#2b2b2b;padding-bottom:2px}
.back{height:40px;background:#fff;border:1px solid #dcdcdc}
.next{height:36px;background:#e8e8e8}
.pager{display:flex;align-items:center;gap:8px}
.pager i{width:8px;height:8px;border-radius:50%;background:#bdbdbd}
.pager .active{width:12px;height:12px;background:#e95420}
.notifications{grid-column:3;justify-self:end;margin-top:2px;width:208px;height:966px;background:#313233;border:2px solid #262728;border-right:0;padding:5px 0 0 6px;color:#fff;font:11px "DejaVu Sans Condensed","DejaVu Sans",sans-serif;letter-spacing:-.06px}
.tools{display:flex;align-items:center;height:22px;width:187px}
.tools svg{width:16px;height:16px}
.tool-active{width:22px;height:22px;border:1px solid #5a5b5c;background:#404142;border-radius:2px;display:grid;place-items:center}
.tool-sort{margin-left:auto;margin-right:14px}
.notice{width:192px;height:35px;background:#3d3e3f;margin-top:7px;margin-left:-1px;display:flex;align-items:center;padding-left:9px}
.notice+.notice{margin-top:6px}
.notice span{width:136px;white-space:nowrap;padding-top:2px}
.notice svg{width:10px;height:9px;margin-bottom:2px}
.notice svg+svg{margin-left:14px}
.statusbar{height:23px;flex:none;display:flex;align-items:center;padding-left:1664px;gap:3px}
.statusbar svg{width:16px;height:16px}
.hostkey{color:#f4f4f4;font-size:12px;white-space:nowrap;line-height:16px;letter-spacing:-.55px;margin-top:2px}
.taskbar{height:48px;flex:none;display:grid;grid-template-columns:663px 1fr 191px;align-items:center}
.scene{grid-area:1/1/2/4;width:1920px;height:48px}
.apps{grid-area:1/2;display:flex;gap:20px;height:24px}
.apps svg{width:24px;height:24px}
.with-badge,.running{position:relative;width:24px;height:24px}
.badge{position:absolute;left:13px;top:-5px;width:16px;height:16px;border-radius:50%;font:11px/16px "Open Sans",sans-serif;text-align:center;color:#171717}
.pink{background:#dca0dc}
.amber{background:#ffc011}
.running::after{content:"";position:absolute;left:9px;bottom:-7px;width:6px;height:3px;border-radius:2px;background:#9699a4}
.tray{grid-area:1/3;width:170px;height:28px}
.pre{grid-area:1/3;justify-self:start;margin-left:152px;margin-top:15px;width:16px;text-align:center;font:bold 6px/7px "Open Sans",sans-serif;color:#2b2100}
```
